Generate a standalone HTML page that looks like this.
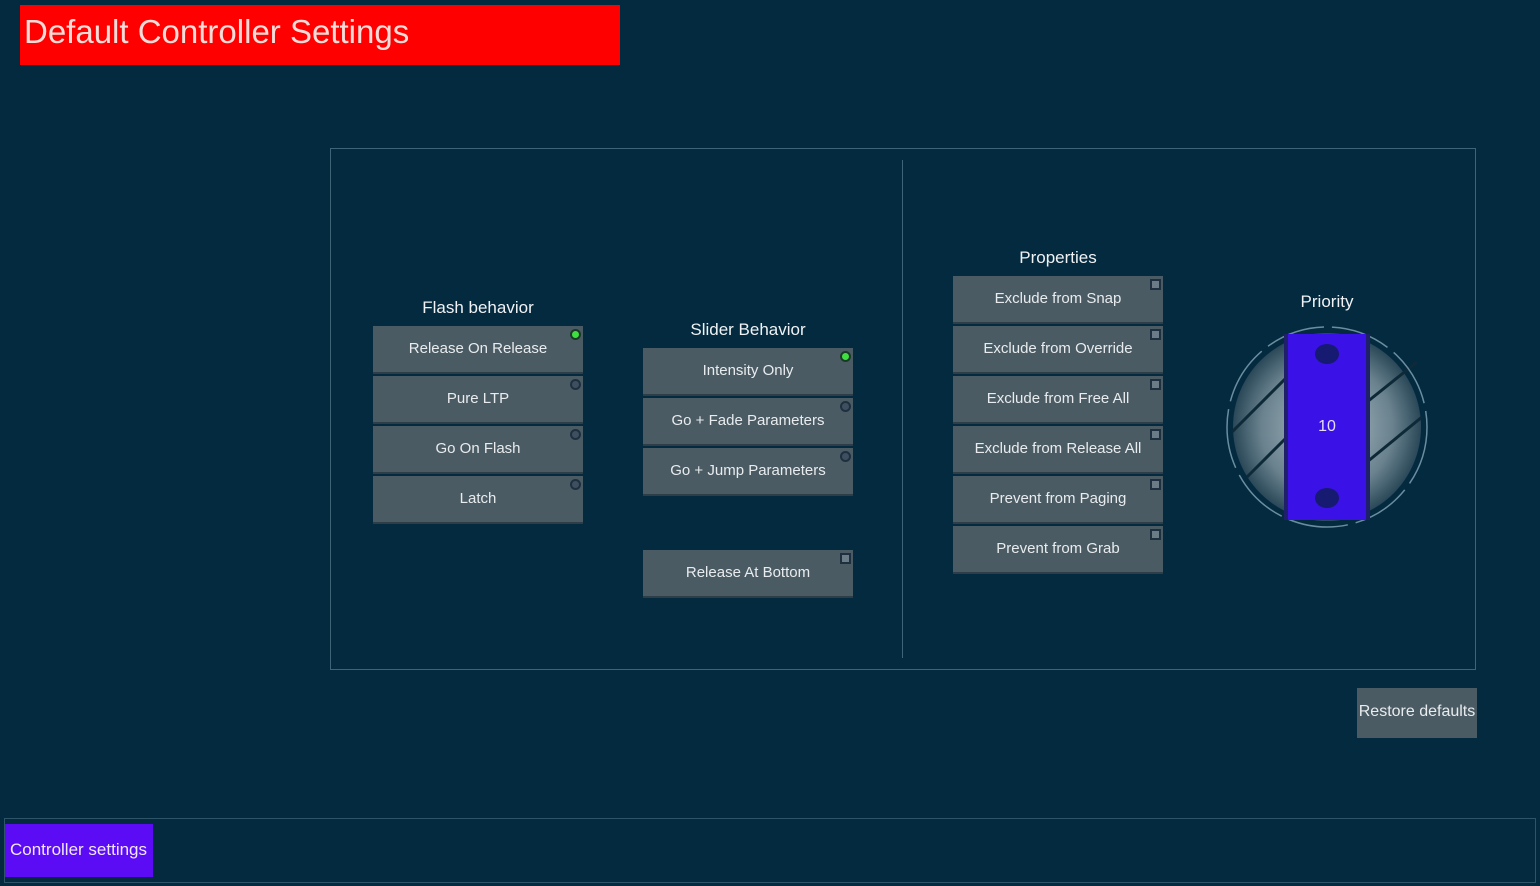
<!DOCTYPE html>
<html><head><style>
*{margin:0;padding:0;box-sizing:border-box}
html,body{width:1540px;height:886px;overflow:hidden}
body{background:#042a40;position:relative;font-family:"Liberation Sans",sans-serif;color:#e4e8ea;white-space:nowrap}
.a{position:absolute}
.title{left:20px;top:5px;width:600px;height:60px;background:#fe0000;color:#f6dcd8;font-size:33px;padding-left:4px;line-height:54px}
.panel{left:330px;top:148px;width:1146px;height:522px;border:1px solid #3e6478}
.div{left:902px;top:160px;width:1px;height:498px;background:#3e6478}
.btn{position:absolute;width:210px;height:48px;background:#4b5b63;border-bottom:2px solid #2e3e48;font-size:15px;text-align:center;line-height:46px;color:#e8ecee}
.led{position:absolute;right:2px;top:3px;width:11px;height:11px;border-radius:50%;background:#3e5060;border:2px solid #1e3040}
.led.on{background:#3ee040;border-color:#1a3a28}
.sq{position:absolute;right:2px;top:3px;width:11px;height:11px;background:#6c7c86;border:2px solid #1e3040}
.lbl{position:absolute;font-size:17px;text-align:center;width:210px;color:#f0f2f4}
</style></head><body>
<div class="a title">Default Controller Settings</div>
<div class="a panel"></div>
<div class="a div"></div>

<div class="lbl" style="left:373px;top:298px">Flash behavior</div>
<div class="btn" style="left:373px;top:326px">Release On Release<div class="led on"></div></div>
<div class="btn" style="left:373px;top:376px">Pure LTP<div class="led"></div></div>
<div class="btn" style="left:373px;top:426px">Go On Flash<div class="led"></div></div>
<div class="btn" style="left:373px;top:476px">Latch<div class="led"></div></div>

<div class="lbl" style="left:643px;top:320px">Slider Behavior</div>
<div class="btn" style="left:643px;top:348px">Intensity Only<div class="led on"></div></div>
<div class="btn" style="left:643px;top:398px">Go + Fade Parameters<div class="led"></div></div>
<div class="btn" style="left:643px;top:448px">Go + Jump Parameters<div class="led"></div></div>
<div class="btn" style="left:643px;top:550px">Release At Bottom<div class="sq"></div></div>

<div class="lbl" style="left:953px;top:248px">Properties</div>
<div class="btn" style="left:953px;top:276px">Exclude from Snap<div class="sq"></div></div>
<div class="btn" style="left:953px;top:326px">Exclude from Override<div class="sq"></div></div>
<div class="btn" style="left:953px;top:376px">Exclude from Free All<div class="sq"></div></div>
<div class="btn" style="left:953px;top:426px">Exclude from Release All<div class="sq"></div></div>
<div class="btn" style="left:953px;top:476px">Prevent from Paging<div class="sq"></div></div>
<div class="btn" style="left:953px;top:526px">Prevent from Grab<div class="sq"></div></div>

<div class="lbl" style="left:1222px;top:292px">Priority</div>
<svg class="a" style="left:1222px;top:322px" width="210" height="210" viewBox="0 0 210 210">
<defs><radialGradient id="g" cx="50%" cy="50%" r="50%"><stop offset="0" stop-color="#b0c4cc"/><stop offset="0.7" stop-color="#6a828e"/><stop offset="1" stop-color="#2a4858"/></radialGradient></defs>
<circle cx="105" cy="105" r="94" fill="url(#g)"/>
<g stroke="#0e2a38" stroke-width="3">
<line x1="10" y1="110" x2="65" y2="55"/><line x1="25" y1="155" x2="65" y2="115"/>
<line x1="145" y1="80" x2="195" y2="40"/><line x1="145" y1="140" x2="200" y2="95"/>
</g>
<circle cx="105" cy="105" r="100" fill="none" stroke="#6a8ea0" stroke-width="1.5" stroke-dasharray="60 8"/>
<rect x="62" y="12" width="86" height="186" fill="#3a12e8"/>
<rect x="62" y="12" width="4" height="186" fill="#20206a"/><rect x="144" y="12" width="4" height="186" fill="#20206a"/>
<ellipse cx="105" cy="32" rx="12" ry="10" fill="#161a70"/><ellipse cx="105" cy="176" rx="12" ry="10" fill="#161a70"/>
<text x="105" y="109" fill="#e8dcff" font-size="16" text-anchor="middle" font-family="Liberation Sans,sans-serif">10</text>
</svg>

<div class="btn" style="left:1357px;top:688px;width:120px;height:50px;line-height:48px;border:none;font-size:16px">Restore defaults</div>

<div class="a" style="left:4px;top:818px;width:1532px;height:65px;border:1px solid #2e5468"></div>
<div class="a" style="left:5px;top:824px;width:148px;height:53px;background:#5b0cf4;color:#f2e6ff;font-size:17px;line-height:51px;padding-left:5px">Controller settings</div>
</body></html>
